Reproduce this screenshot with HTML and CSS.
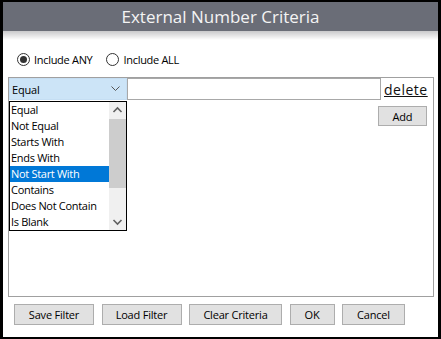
FILE: index.html
```html
<!DOCTYPE html>
<html>
<head>
<meta name="viewport" content="width=device-width, initial-scale=1">
<link rel="stylesheet" href="styles.css">
</head>
<body>
<div class="dialog">
  <div class="titlebar">External Number Criteria</div>
  <div class="titleshade"></div>

  <div class="modes">
    <label class="radio"><span class="dot on"></span>Include ANY</label>
    <label class="radio"><span class="dot"></span>Include ALL</label>
  </div>

  <div class="panel">
    <div class="critrow">
      <div class="combo">
        <span>Equal</span>
        <svg class="chev" width="9" height="6" viewBox="0 0 9 6"><polyline points="0.5,0.5 4.5,4.5 8.5,0.5" fill="none" stroke="#555" stroke-width="1"/></svg>
      </div>
      <div class="valuebox"></div>
      <a class="dellink" href="#">delete</a>

      <div class="droplist">
        <ul class="items">
          <li>Equal</li>
          <li>Not Equal</li>
          <li>Starts With</li>
          <li>Ends With</li>
          <li class="sel">Not Start With</li>
          <li>Contains</li>
          <li>Does Not Contain</li>
          <li>Is Blank</li>
        </ul>
        <div class="scroll">
          <svg class="arrow" width="17" height="17" viewBox="0 0 17 17"><polyline points="4.5,10 8.5,6 12.5,10" fill="none" stroke="#606060" stroke-width="1.6"/></svg>
          <div class="track"><div class="thumb"></div></div>
          <svg class="arrow" width="17" height="17" viewBox="0 0 17 17"><polyline points="4.5,7 8.5,11 12.5,7" fill="none" stroke="#606060" stroke-width="1.6"/></svg>
        </div>
      </div>
    </div>
    <div class="addrow"><button class="btn add">Add</button></div>
  </div>

  <div class="actions">
    <button class="btn w80">Save Filter</button>
    <button class="btn w80">Load Filter</button>
    <button class="btn w93">Clear Criteria</button>
    <button class="btn w45">OK</button>
    <button class="btn w63">Cancel</button>
  </div>
</div>
</body>
</html>
```

FILE: styles.css
```css
* {box-sizing: border-box}

body, html {
  margin: 0;
  height: 100%;
  background: #000;
  font-family: "Open Sans", "Noto Sans", sans-serif;
}

/* white window inside the black frame */
.dialog {
  margin: 2px 3px;
  width: 435px;
  height: 335px;
  background: #fff;
}

.titlebar {
  height: 29px;
  background: #6a6d77;
  color: #f4f4f4;
  font-size: 17px;
  line-height: 29px;
  text-align: center;
}
.titleshade {
  height: 9px;
  background: linear-gradient(#c9c9cb, #fff);
}

/* Include ANY / ALL */
.modes {
  display: flex;
  gap: 14px;
  padding: 12px 0 0 14px;
  height: 37px;
  font-size: 11px;
  letter-spacing: -0.3px;
  color: #000;
}
.radio {
  display: flex;
  align-items: center;
  height: 14px;
  gap: 4px;
}
.dot {
  width: 13px;
  height: 13px;
  border: 1px solid #333;
  border-radius: 50%;
  display: flex;
  align-items: center;
  justify-content: center;
}
.dot.on::after {
  content: "";
  width: 7px;
  height: 7px;
  border-radius: 50%;
  background: #333;
}

/* criteria panel */
.panel {
  margin-left: 5px;
  width: 426px;
  height: 220px;
  border: 1px solid #a0a0a0;
}
.critrow {
  position: relative;
  display: flex;
  align-items: center;
  height: 22px;
}
.combo {
  width: 118px;
  height: 22px;
  background: #cce4f7;
  border: 1px solid #c5def3;
  display: flex;
  align-items: center;
  justify-content: space-between;
  padding: 0 6px 0 2px;
  font-size: 11px;
  letter-spacing: -0.2px;
}
.valuebox {
  width: 254px;
  height: 22px;
  border: 1px solid #a8a8a8;
}
.dellink {
  margin-left: 3px;
  color: #111;
  font-size: 14px;
  text-decoration: underline;
  letter-spacing: 0.5px;
}

/* open dropdown */
.droplist {
  position: absolute;
  left: 0;
  top: 23px;
  width: 118px;
  height: 130px;
  border: 1px solid #000;
  background: #fff;
  display: flex;
}
.items {
  list-style: none;
  margin: 0;
  padding: 0;
  flex: 1;
  font-size: 11px;
  letter-spacing: -0.3px;
}
.items li {
  height: 16px;
  line-height: 16px;
  padding-left: 1px;
  color: #000;
}
.items li.sel {
  background: #0078d7;
  color: #fff;
}
.scroll {
  width: 17px;
  background: #f0f0f0;
  display: flex;
  flex-direction: column;
}
.arrow {display: block}
.track {
  flex: 1;
}
.thumb {
  height: 69px;
  background: #cdcdcd;
}

.addrow {
  display: flex;
  justify-content: flex-end;
  padding: 6px 6px 0 0;
}

.btn {
  height: 21px;
  background: #e1e1e1;
  border: 1px solid #adadad;
  font-family: "Open Sans", "Noto Sans", sans-serif;
  font-size: 11px;
  letter-spacing: -0.2px;
  color: #000;
  padding: 0;
}
.add {width: 49px; height: 20px}

.actions {
  display: flex;
  gap: 7.5px;
  padding: 7px 0 0 11px;
}
.w80 {width: 80px}
.w93 {width: 93px}
.w45 {width: 45px}
.w63 {width: 63px}
```
